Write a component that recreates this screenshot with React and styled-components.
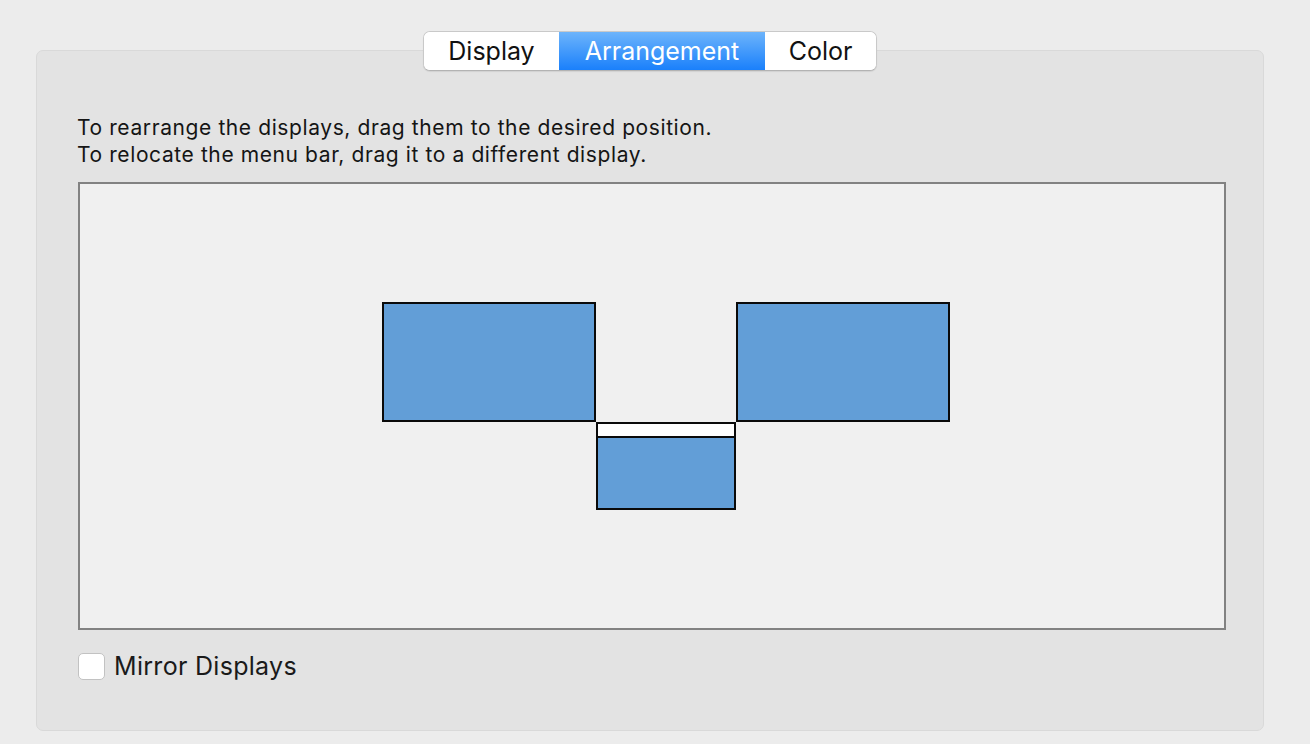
import styled, { createGlobalStyle } from 'styled-components';
import { useState } from 'react';

const GlobalStyle = createGlobalStyle`
  html, body {
    margin: 0;
    background: #ececec;
  }
  body {
    font-family: Inter, "Liberation Sans", Arial, sans-serif;
    color: #1d1d1d;
  }
`;

const tabs = [
  { name: 'Display', width: 135 },
  { name: 'Arrangement', width: 206 },
  { name: 'Color', width: 111 },
];

// display positions inside the arrangement canvas (canvas coords)
const displays = [
  { id: 'left', x: 302, y: 118, w: 214, h: 120 },
  { id: 'right', x: 656, y: 118, w: 214, h: 120 },
  { id: 'main', x: 516, y: 238, w: 140, h: 88, menuBar: true },
];

const App = () => {
  const [active, setActive] = useState('Arrangement');
  const [mirror, setMirror] = useState(false);

  return (
    <>
      <GlobalStyle />
      <Page>
        <TabBar>
          {tabs.map((t) => (
            <Tab
              key={t.name}
              $width={t.width}
              $active={t.name === active}
              onClick={() => setActive(t.name)}
            >
              {t.name}
            </Tab>
          ))}
        </TabBar>
        <Panel>
          <Hint>
            To rearrange the displays, drag them to the desired position.
            <br />
            To relocate the menu bar, drag it to a different display.
          </Hint>
          <Canvas>
            {displays.map((d) => (
              <Screen
                key={d.id}
                style={{ left: d.x, top: d.y, width: d.w, height: d.h }}
              >
                {d.menuBar && <MenuBar />}
              </Screen>
            ))}
          </Canvas>
          <CheckRow onClick={() => setMirror(!mirror)}>
            <Box $checked={mirror}>{mirror ? '✓' : ''}</Box>
            <Label>Mirror Displays</Label>
          </CheckRow>
        </Panel>
      </Page>
    </>
  );
};

const Page = styled.div`
  display: flex;
  flex-direction: column;
  align-items: center;
  width: 1228px;
  padding: 31px 0 0 36px;
`;

const TabBar = styled.div`
  position: relative;
  z-index: 1;
  display: flex;
  height: 40px;
  border-radius: 7px;
  border: 1px solid #c9c9c9;
  border-bottom-color: #b3b3b3;
  box-shadow: 0 1px 1px rgba(0, 0, 0, 0.08);
  overflow: hidden;
  background: #fff;
  box-sizing: border-box;
`;

const Tab = styled.div`
  display: flex;
  align-items: center;
  justify-content: center;
  width: ${(p) => p.$width}px;
  font-size: 25px;
  color: ${(p) => (p.$active ? '#fff' : '#111')};
  background: ${(p) =>
    p.$active ? 'linear-gradient(#6db4fb, #1a80fb)' : '#fff'};
  cursor: default;
  padding-bottom: 1px;
`;

const Panel = styled.div`
  margin-top: -21px;
  width: 100%;
  height: 681px;
  box-sizing: border-box;
  background: #e3e3e3;
  border: 1px solid #d9d9d9;
  border-radius: 7px;
  padding: 63px 37px 0 41px;
`;

const Hint = styled.p`
  margin: 0 0 0 -1px;
  font-size: 21px;
  letter-spacing: 0.6px;
  line-height: 27px;
  color: #151515;
`;

const Canvas = styled.div`
  position: relative;
  margin-top: 14px;
  width: 1148px;
  height: 448px;
  box-sizing: border-box;
  background: #f0f0f0;
  border: 2px solid #828282;
`;

const Screen = styled.div`
  position: absolute;
  box-sizing: border-box;
  background: #629ed7;
  border: 2px solid #0a0a0a;
`;

const MenuBar = styled.div`
  height: 12px;
  background: #fff;
  border-bottom: 2px solid #0a0a0a;
`;

const CheckRow = styled.div`
  display: flex;
  align-items: center;
  gap: 9px;
  margin-top: 21px;
  cursor: default;
`;

const Box = styled.div`
  width: 27px;
  height: 27px;
  box-sizing: border-box;
  border-radius: 5px;
  border: 1px solid #c2c2c2;
  background: #fff;
  font-size: 18px;
  display: flex;
  align-items: center;
  justify-content: center;
`;

const Label = styled.span`
  font-size: 25px;
  letter-spacing: 0.3px;
  color: #1a1a1a;
`;

export default App;
